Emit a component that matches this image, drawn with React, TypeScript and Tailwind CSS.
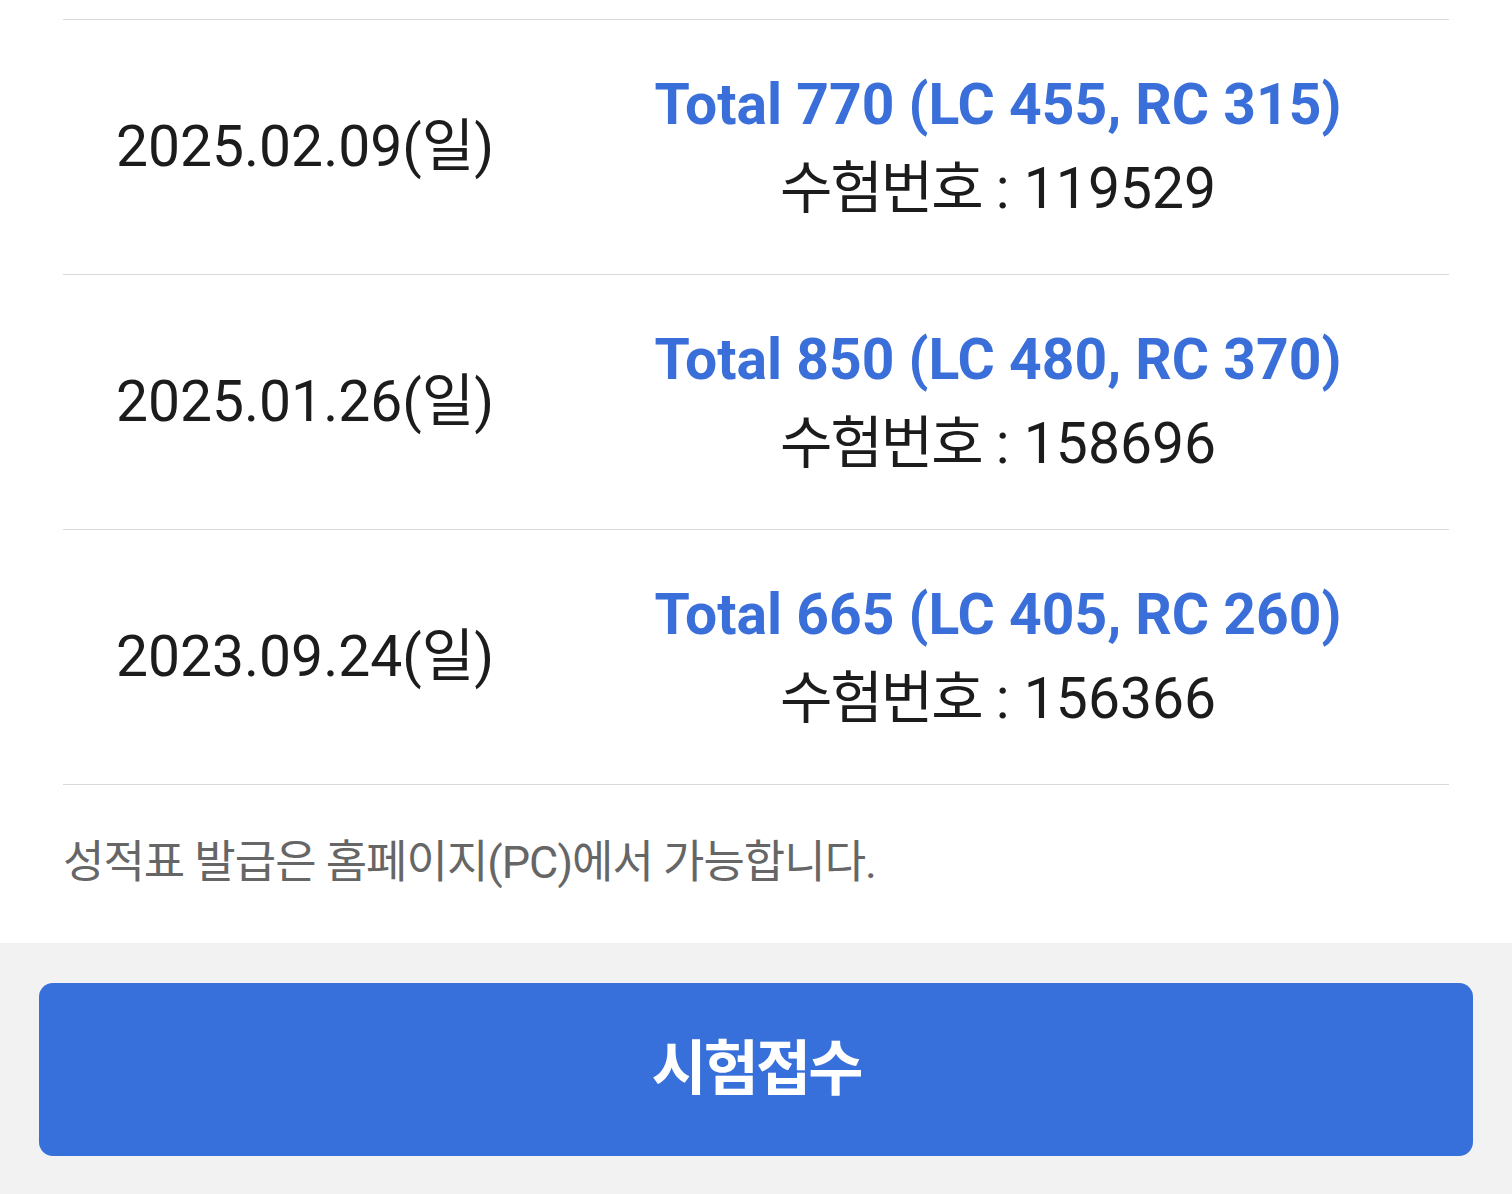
import React from 'react';

interface ScoreRecord {
  date: string;
  total: number;
  lc: number;
  rc: number;
  examNo: string;
}

const records: ScoreRecord[] = [
  { date: '2025.02.09(일)', total: 770, lc: 455, rc: 315, examNo: '119529' },
  { date: '2025.01.26(일)', total: 850, lc: 480, rc: 370, examNo: '158696' },
  { date: '2023.09.24(일)', total: 665, lc: 405, rc: 260, examNo: '156366' },
];

const font = { fontFamily: 'Roboto, "Noto Sans CJK KR", sans-serif' };

const ScoreRow: React.FC<{ record: ScoreRecord }> = ({ record }) => (
  <div className="flex h-[255px] items-center border-b border-[#d9d9d9]">
    {/* Exam date */}
    <div className="flex w-[484px] justify-center text-[57px] text-[#1c1c1c]">
      {record.date}
    </div>

    {/* Scores */}
    <div className="flex flex-1 flex-col items-center leading-[84px]">
      <div className="text-[57px] font-bold text-[#3a6fd9]">
        Total {record.total} (LC {record.lc}, RC {record.rc})
      </div>
      <div className="text-[57px] text-[#1c1c1c]">
        <span className="tracking-[-2px]">수험번호</span>
        <span> : {record.examNo}</span>
      </div>
    </div>
  </div>
);

export default function App() {
  return (
    <div className="min-h-[1194px] w-full bg-white" style={font}>
      <div className="px-[63px] pt-[19px]">
        <div className="border-t border-[#d9d9d9]">
          {records.map((record, idx) => (
            <ScoreRow key={idx} record={record} />
          ))}
        </div>

        {/* Notice */}
        <div className="flex h-[158px] items-center pb-[2px] text-[45px] text-[#666666] tracking-[-1px]">
          성적표 발급은 홈페이지(PC)에서 가능합니다.
        </div>
      </div>

      {/* Bottom action */}
      <div className="bg-[#f2f2f2] px-[39px] pt-[40px] pb-[38px]">
        <button className="flex h-[173px] w-full items-center justify-center rounded-[14px] bg-[#3770db] text-[60px] font-bold text-white tracking-[-3px]">
          시험접수
        </button>
      </div>
    </div>
  );
}
